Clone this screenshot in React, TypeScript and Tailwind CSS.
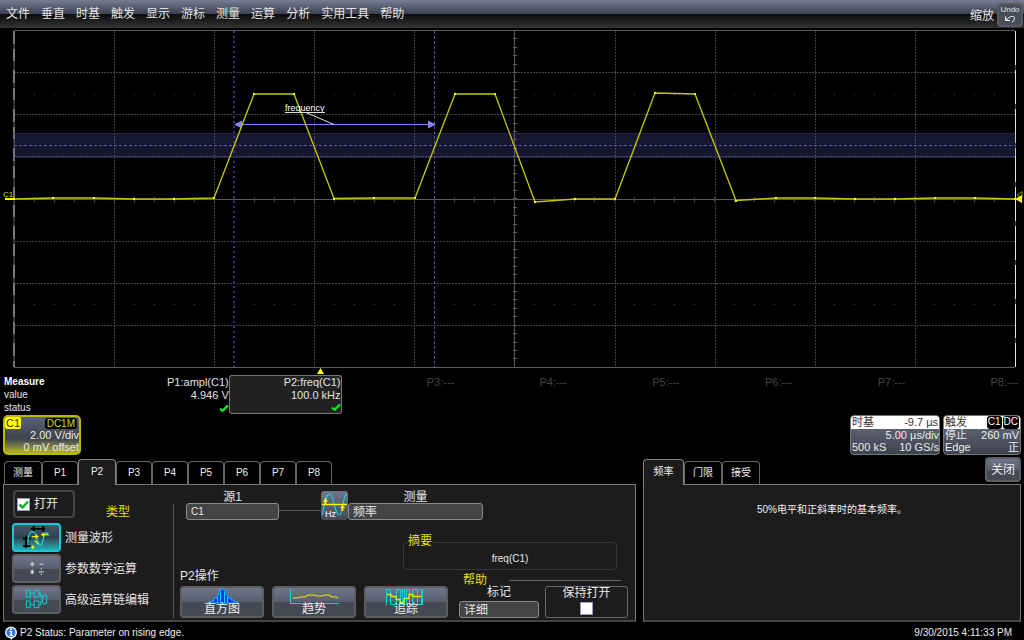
import { useState } from 'react';
import clsx from 'clsx';

const menuItems = ['文件', '垂直', '时基', '触发', '显示', '游标', '测量', '运算', '分析', '实用工具', '帮助'];
const measureTabs = ['测量', 'P1', 'P2', 'P3', 'P4', 'P5', 'P6', 'P7', 'P8'];
const helpTabs = ['频率', '门限', '接受'];

const measurements = [
   { name: 'P1:ampl(C1)', value: '4.946 V', ok: true },
   { name: 'P2:freq(C1)', value: '100.0 kHz', ok: true },
   { name: 'P3:---', value: '', ok: false },
   { name: 'P4:---', value: '', ok: false },
   { name: 'P5:---', value: '', ok: false },
   { name: 'P6:---', value: '', ok: false },
   { name: 'P7:---', value: '', ok: false },
   { name: 'P8:---', value: '', ok: false },
];

// sampled trace of C1
const samples = [
   [14, 199], [53, 198], [94, 198], [134, 199], [174, 199], [214, 198],
   [254, 94], [294, 94], [334, 198.5], [374, 198], [415, 198], [455, 94],
   [495, 94], [535, 202], [575, 199], [615, 199], [655, 93], [695, 94],
   [736, 200.5], [776, 198], [815, 198], [855, 199], [895, 199], [935, 198],
   [975, 198], [1015, 199],
];

const raised =
   'rounded-[4px] border-2 border-[#5d5e63] bg-linear-to-b from-[#70758a] from-0% via-[#585d6e] via-50% to-[#454954] to-51% text-[#eee]';
const field =
   'h-[17px] w-full appearance-none rounded-[3px] border border-[#8a8a8a] bg-[#444] pl-1 leading-none text-[#e6e6e6]';

const Check = () => (
   <svg viewBox="0 0 10 8" className="ml-auto h-2 w-2.5" role="img" aria-label="ok">
      <path d="M1 4.6 L3.6 6.8 L9 1.4" fill="none" stroke="#00f020" strokeWidth="2.2" />
   </svg>
);

const Waveform = () => {
   const columns = [1, 2, 3, 4, 6, 7, 8, 9];
   const rows = [1, 2, 3, 5, 6, 7];
   const ticks = Array.from({ length: 49 }, (_, i) => i + 1);
   return (
      <svg viewBox="0 28 1024 347" className="block w-full">
         <g stroke="#424242" strokeDasharray="2 1">
            {columns.map((c) => (
               <line key={c} x1={14.5 + Math.round(c * 100.1)} x2={14.5 + Math.round(c * 100.1)} y1="31" y2="367" />
            ))}
            {rows.map((r) => (
               <line key={r} x1="14" x2="1015" y1={30.5 + Math.round(r * 42.1)} y2={30.5 + Math.round(r * 42.1)} />
            ))}
         </g>
         <g stroke="#5c5c5c">
            <path d="M14 30.5 H1015 M14 367.5 H1015 M14 199.5 H1015" />
            <path d="M514.5 31 V367" />
            {ticks.map((t) => (
               <path key={t} d={`M${14.5 + t * 20} 197 v5`} stroke="#484848" />
            ))}
            {ticks.slice(0, 39).map((t) => (
               <path key={t} d={`M513 ${30.5 + Math.round(t * 8.42)} h4`} />
            ))}
         </g>
         <g fill="#4a4a4a">
            {ticks.filter((t) => t % 5 !== 0).map((t) => (
               <path key={t} d={`M${14 + t * 20} 94 h1 v1 h-1 z M${14 + t * 20} 304 h1 v1 h-1 z`} />
            ))}
         </g>
         <path d="M14 31 V367" stroke="#333" strokeWidth="2" />
         <path d="M14 31 V367" stroke="#777" strokeWidth="2" strokeDasharray="13 5 12 9" />
         <path d="M1015.5 31 V367" stroke="#444" />
         <path d="M1015.5 31 V367" stroke="#e4e4e4" strokeDasharray="34 5" />

         <rect x="14" y="133" width="1002" height="24" fill="#5a5ac0" fillOpacity="0.24" />
         <path d="M14 133.5 H1015 M14 157.5 H1015" stroke="#24244a" />
         <path d="M14 145.5 H1015" stroke="#5858ac" strokeDasharray="3 2" />
         <path d="M234 31 V367" stroke="#36367a" strokeWidth="2" strokeDasharray="2 3" />
         <path d="M434.5 31 V367" stroke="#5050a4" strokeDasharray="3 2" />
         <path d="M236 124.5 H432" stroke="#8484f8" />
         <path d="M234 124.5 l8 -4 v8 z M436 124.5 l-8 -4 v8 z" fill="#8484f8" />

         <polyline points={samples.map((p) => p.join(',')).join(' ')} fill="none" stroke="#c6c600" strokeWidth="1.3" />
         {samples.map(([x, y]) => (
            <rect key={x} x={x - 1} y={Math.round(y) - 1} width="2" height="2" fill="#ffff00" />
         ))}

         <text x="285" y="111" fill="#fff" fontSize="9">frequency</text>
         <path d="M285 112.5 H325 M306 112.5 L334 124.5" stroke="#e0e0e0" />

         <text x="3" y="197" fill="#d8d800" fontSize="8">C1</text>
         <path d="M5 199 H15" stroke="#ffff00" strokeWidth="2" />
         <path d="M1022 191.5 v7 l-5 -3.5 z" fill="none" stroke="#8c8c00" />
         <path d="M1022 195 v8 l-7 -4 z" fill="#ffff00" />
         <path d="M320.500 368 l3.500 6 h-7 z" fill="#ffff00" />
      </svg>
   );
};

const MeasureTable = () => (
   <div className="pr-1.5">
      <table className="w-full table-fixed border-separate border-spacing-0 text-right text-[11px] leading-[12px] text-[#e2e2e2]">
         <thead>
            <tr className="h-[13px]">
               <th scope="col" className="w-[116px] p-0 pl-1 pt-px text-left text-[10px] font-bold text-white">Measure</th>
               {measurements.map((m, i) => (
                  <th
                     key={m.name}
                     scope="col"
                     className={clsx(
                        'p-0 font-normal',
                        i === 1 ? 'rounded-t-[3px] border border-b-0 border-[#777] bg-[#222]' : 'pt-px',
                        i > 1 && 'text-[#444]'
                     )}
                  >
                     {m.name}
                  </th>
               ))}
            </tr>
         </thead>
         <tbody>
            <tr className="h-[13px]">
               <th scope="row" className="p-0 pl-1 text-left text-[10px] font-normal">value</th>
               {measurements.map((m, i) => (
                  <td key={m.name} className={clsx('p-0', i === 1 && 'border-x border-[#777] bg-[#222]')}>
                     {m.value}
                  </td>
               ))}
            </tr>
            <tr className="h-[13px]">
               <th scope="row" className="p-0 pl-1 text-left text-[10px] font-normal">status</th>
               {measurements.map((m, i) => (
                  <td
                     key={m.name}
                     className={clsx('p-0', i === 1 && 'rounded-b-[3px] border border-t-0 border-[#777] bg-[#222]')}
                  >
                     {m.ok && <Check />}
                  </td>
               ))}
            </tr>
         </tbody>
      </table>
   </div>
);

const Descriptors = () => (
   <div className="mt-px flex h-10 items-start gap-[3px] px-[3px] text-[11px] leading-[12px] text-[#ececec]">
      <div className="mr-auto h-10 w-[78px] overflow-hidden rounded-[5px] border-2 border-[#b8b800] bg-linear-to-b from-[#5c637a] from-0% via-[#3e424c] via-60% to-[#b4b400] to-100%">
         <div className="flex items-center justify-between pr-0.5">
            <span className="rounded-[2px] bg-[#ffff00] px-px text-[#333300]">C1</span>
            <span className="rounded-[3px] bg-black px-0.5 text-[10px] leading-[11px] text-[#d8d800]">DC1M</span>
         </div>
         <div className="text-right whitespace-nowrap">2.00 V/div</div>
         <div className="text-right whitespace-nowrap">0 mV offset</div>
      </div>
      <div className="h-10 w-[90px] overflow-hidden rounded-[4px] border border-[#777] bg-linear-to-b from-[#6c7184] to-[#3e424d]">
         <div className="flex h-[13px] justify-between bg-white px-px text-[#333]">
            <span>时基</span>
            <span>-9.7 µs</span>
         </div>
         <div className="text-right">5.00 µs/div</div>
         <div className="flex justify-between pl-px">
            <span>500 kS</span>
            <span>10 GS/s</span>
         </div>
      </div>
      <div className="h-10 w-[78px] overflow-hidden rounded-[4px] border border-[#777] bg-linear-to-b from-[#6c7184] to-[#3e424d]">
         <div className="flex h-[13px] justify-between bg-white px-px text-[#333]">
            <span>触发</span>
            <span className="flex gap-px text-[10px] text-white">
               <span className="rounded-[3px] bg-black px-px">C1</span>
               <span className="rounded-[3px] bg-black px-px">DC</span>
            </span>
         </div>
         <div className="flex justify-between px-px">
            <span>停止</span>
            <span>260 mV</span>
         </div>
         <div className="flex justify-between px-px">
            <span>Edge</span>
            <span>正</span>
         </div>
      </div>
   </div>
);

type TabsProps = {
   tabs: string[];
   active: string;
   onSelect: (tab: string) => void;
   first: string;
   rest: string;
};

const Tabs = ({ tabs, active, onSelect, first, rest }: TabsProps) => (
   <div className="relative z-10 flex items-end" role="tablist">
      {tabs.map((tab, i) => (
         <button
            key={tab}
            type="button"
            role="tab"
            aria-selected={tab === active}
            onClick={() => onSelect(tab)}
            className={clsx(
               'rounded-t-[4px] border border-b-0 text-[10px] leading-none text-[#eee]',
               tab === active
                  ? '-mb-px h-[26px] border-[#858585] bg-[#1c1c1c] pb-0.5'
                  : 'h-[23px] border-[#666] bg-black',
               tab === active && i > 0 ? 'w-[38px]' : i === 0 ? first : rest
            )}
         >
            {tab}
         </button>
      ))}
   </div>
);

const WaveIcon = () => (
   <svg viewBox="0 0 46 26" className="h-full w-full" fill="none">
      <path d="M20 1 V7 M30 1 V7 M17 4 H32 M12 12 V24 M9 14 H17 M9 22 H17" stroke="#000" strokeWidth="2" />
      <path d="M14 18 C14 10 17 6 20 7 C24 8 23 21 27 21 C31 21 29 9 33 8 C34 8 35 9 36 11" stroke="#10dce8" strokeWidth="1.2" />
      <path d="M18 12 H24 M22 10 L24.500 12 L22 14 M28 10 H35 M31 8 L28.500 10 L31 12 M17 23 H21 M19 21 V25 M21 16 L25 20" stroke="#f0f000" strokeWidth="1.3" />
   </svg>
);

const MathIcon = () => (
   <svg viewBox="0 0 46 26" className="h-full w-full" stroke="#e8e8e8" fill="none">
      <path d="M16 8.500 h5 M18.500 6 v5 M26 8.500 h4 M18.500 14 v5 M16.500 15 l4 3 M20.500 15 l-4 3 M25.500 16.500 h5" />
      <path d="M27.500 13.500 h1 M27.500 19 h1" strokeWidth="1.4" />
   </svg>
);

const ChainIcon = () => (
   <svg viewBox="0 0 46 26" className="h-full w-full" stroke="#10d4e0" fill="none">
      <path d="M12.500 3.500 h4 v7 h-4 z M20.500 3.500 h5 v7 h-5 z M12.500 14.500 h4 v7 h-4 z M20.500 14.500 h5 v7 h-5 z M29.500 8.500 h4 v9 h-4 z" />
      <path d="M16.500 6.500 h4 M16.500 18.500 h4 M25.500 6.500 h2 v4 h2 M25.500 18.500 h2 v-4 h2" />
   </svg>
);

const HzIcon = () => (
   <svg viewBox="0 0 27 29" className="h-full w-full" fill="none">
      <path d="M1 24 C4 14 4 3 8.500 3 C13 3 13 24 18.500 24 C22 24 21 5 26 3" stroke="#10d8e4" strokeWidth="1.2" />
      <path d="M1 13.500 H26" stroke="#ffff00" strokeWidth="1.400" />
      <path d="M4.500 7 V13 M2.500 10 h4 M21.500 13 V20 M19.500 16.500 h4" stroke="#ffff00" strokeWidth="1.500" />
      <text x="4" y="26" fill="#fff" fontSize="9">Hz</text>
   </svg>
);

const HistogramIcon = () => (
   <svg viewBox="0 0 60 17" className="h-[17px] w-[60px]">
      <path d="M16 15 v-1 h3 v-1 h3 v-3 h3 v-3 h2 v-4 h2 v-2 h3 v2 h2 v4 h2 v3 h3 v2 h3 v2 h4 v1 z" fill="#0030ff" stroke="#10b4ff" />
      <path d="M25.500 15 V9 M28.500 15 V4 M32.500 15 V4 M35.500 15 V9" stroke="#10d4ff" />
   </svg>
);

const TrendIcon = () => (
   <svg viewBox="0 0 60 17" className="h-[17px] w-[60px]" fill="none">
      <path d="M6.500 1 V15.500 H55" stroke="#10d4e0" />
      <path d="M9 10 h4 l3 -1 h5 l3 -2 h6 l3 1 h5 l3 -1 h4 l3 2 h4 l2 1" stroke="#e8e800" strokeWidth="1.2" />
   </svg>
);

const TrackIcon = () => (
   <svg viewBox="0 0 60 17" className="h-[17px] w-[60px]" fill="none">
      <path d="M10.500 17 V1.500 h4 V16.500 h6 V1.500 h4 V16.500 h2 V1.500 h2 V16.500 h2 V1.500 h3 V16.500 h3 V1.500 h5 V16.500 h5 V1.500 M45.500 1 V16" stroke="#10d4e0" />
      <path d="M11 6.500 h4 v2 h5 v3 h4 v3 h4 v-4 h5 v-4 h4 v2 h8" stroke="#e8e800" strokeWidth="1.3" />
   </svg>
);

const types = [
   { label: '测量波形', icon: <WaveIcon /> },
   { label: '参数数学运算', icon: <MathIcon /> },
   { label: '高级运算链编辑', icon: <ChainIcon /> },
];

const actions = [
   { label: '直方图', icon: <HistogramIcon /> },
   { label: '趋势', icon: <TrendIcon /> },
   { label: '追踪', icon: <TrackIcon /> },
];

const MeasurePanel = () => {
   const [on, setOn] = useState(true);
   const [keepOpen, setKeepOpen] = useState(false);
   const [type, setType] = useState(types[0].label);
   return (
      <div className="flex h-[138px] border border-b-2 border-[#777] border-b-[#444] bg-[#1c1c1c] text-[12px] leading-[12px] text-[#e6e6e6]">
         <div className="flex w-[169px] flex-col gap-0.5 pt-[5px] pl-2">
            <div className="mb-[3px] flex items-end gap-[31px] pl-px">
               <label className="flex h-7 w-[62px] items-center gap-1 rounded-[4px] border-2 border-[#444] pl-0.5">
                  <span className="relative h-[13px] w-[13px]">
                     <input
                        type="checkbox"
                        checked={on}
                        onChange={(e) => setOn(e.target.checked)}
                        className="block h-[13px] w-[13px] appearance-none border border-[#9a9ac0] bg-white"
                     />
                     {on && (
                        <svg viewBox="0 0 13 13" className="pointer-events-none absolute inset-0">
                           <path d="M2.500 6.500 L5.500 9.500 L11 3.500" fill="none" stroke="#00b818" strokeWidth="2.500" />
                        </svg>
                     )}
                  </span>
                  打开
               </label>
               <span className="text-[#e0e000]">类型</span>
            </div>
            {types.map((t) => (
               <label key={t.label} className="flex h-[29px] items-center gap-1">
                  <button
                     type="button"
                     onClick={() => setType(t.label)}
                     className={
                        t.label === type
                           ? 'h-[29px] w-[49px] rounded-[4px] border-2 border-[#18c8d4] bg-linear-to-b from-[#4c5468] from-0% via-[#2c4450] via-50% to-[#10b4bc] to-100%'
                           : `h-[29px] w-[49px] ${raised}`
                     }
                  >
                     {t.icon}
                  </button>
                  {t.label}
               </label>
            ))}
         </div>
         <div className="mt-[19px] mb-0.5 w-px bg-[#555]" />
         <div className="min-w-0 flex-1 pt-1.5 pr-[7px] pl-1.5">
            <div className="flex h-[29px] items-end pl-1.5">
               <label className="w-[93px] text-center">
                  <span className="block">源1</span>
                  <select className={clsx(field, 'text-[10px]')}>
                     <option>C1</option>
                  </select>
               </label>
               <div className="mb-[9px] h-px w-[42px] bg-[#555]" />
               <button type="button" aria-label="Hz" className="h-[29px] w-[27px] rounded-[3px] bg-linear-to-b from-[#70758a] to-[#454954]">
                  <HzIcon />
               </button>
               <label className="w-[135px] text-center">
                  <span className="block">测量</span>
                  <select className={clsx(field, 'text-[12px]')}>
                     <option>频率</option>
                  </select>
               </label>
            </div>
            <fieldset className="mt-[15px] mr-[11px] ml-auto h-[35px] w-[214px] rounded-[4px] border border-[#3a3a3a] text-center">
               <legend className="ml-1 h-[14px] text-left text-[#e0e000]">摘要</legend>
               <div className="pt-1 text-[10px]">freq(C1)</div>
            </fieldset>
            <div className="flex items-end justify-between">
               <div>
                  <div className="mb-1">P2操作</div>
                  <div className="flex gap-2">
                     {actions.map((a) => (
                        <button
                           key={a.label}
                           type="button"
                           className={clsx('flex h-8 w-[84px] flex-col items-center', raised)}
                        >
                           {a.icon}
                           <span className="-mt-0.5">{a.label}</span>
                        </button>
                     ))}
                  </div>
               </div>
               <div className="w-[169px]">
                  <div className="flex items-center gap-[22px] pr-[7px] pl-1 text-[#e0e000]">
                     帮助
                     <span className="h-px flex-1 bg-[#666]" />
                  </div>
                  <div className="flex gap-1.5">
                     <label className="flex w-20 flex-col justify-between text-center">
                        标记
                        <select className={clsx(field, 'text-[12px]')}>
                           <option>详细</option>
                        </select>
                     </label>
                     <label className="flex h-8 flex-1 flex-col items-center gap-[3px] rounded-[3px] border border-[#666] text-center">
                        保持打开
                        <input
                           type="checkbox"
                           checked={keepOpen}
                           onChange={(e) => setKeepOpen(e.target.checked)}
                           className="h-[13px] w-[13px] appearance-none border border-[#9a9ac0] bg-white checked:bg-[#00b818]"
                        />
                     </label>
                  </div>
               </div>
            </div>
         </div>
      </div>
   );
};

const App = () => {
   const [tab, setTab] = useState('P2');
   const [helpTab, setHelpTab] = useState('频率');
   return (
      <div className="min-h-screen bg-black font-['Liberation_Sans','Noto_Sans_CJK_SC',sans-serif]">
         <header className="flex h-7 items-center bg-linear-to-b from-[#777e92] from-0% via-[#3c4150] via-49% to-[#333] to-100% text-[12px] text-[#e4e4e4]">
            <nav className="flex h-7 flex-1 items-center gap-[11px] bg-linear-to-b from-transparent from-49% via-[#0c0c0c] via-50% to-[#343434] to-100% pl-1.5">
               {menuItems.map((item) => (
                  <button key={item} type="button" className="leading-none">
                     {item}
                  </button>
               ))}
               <span className="mt-1 ml-auto leading-none">缩放</span>
               <button
                  type="button"
                  className="mt-0.5 mr-px -ml-2 flex h-6 w-[26px] flex-col items-center rounded-[4px] border-2 border-[#5a5b60] bg-[#484d5a] text-[8px] leading-[10px]"
               >
                  Undo
                  <svg viewBox="0 0 12 8" className="h-2 w-3" fill="none" stroke="#fff">
                     <path d="M1.500 1.500 V5.500 H6 M2 5 L5 2.500 C7 1 10.500 1 10.500 3.500 C10.500 5.500 9 6.500 8 7" />
                  </svg>
               </button>
            </nav>
         </header>

         <Waveform />
         <MeasureTable />
         <Descriptors />

         <div className="flex gap-[7px] px-[3px]">
            <section className="min-w-0 flex-[633]">
               <div className="flex h-[29px] items-end pl-px">
                  <Tabs tabs={measureTabs} active={tab} onSelect={setTab} first="w-[38px]" rest="w-9" />
               </div>
               <MeasurePanel />
            </section>
            <section className="min-w-0 flex-[378]">
               <div className="flex h-[29px] items-end justify-between">
                  <Tabs tabs={helpTabs} active={helpTab} onSelect={setHelpTab} first="w-[41px]" rest="w-[38px]" />
                  <button type="button" className={clsx('mb-0.5 h-[25px] w-9 text-[12px] leading-none', raised)}>
                     关闭
                  </button>
               </div>
               <div className="h-[138px] border border-b-2 border-[#777] border-b-[#444] bg-[#1c1c1c] pt-[18px] text-center text-[10px] leading-[14px] text-[#eee]">
                  50%电平和正斜率时的基本频率。
               </div>
            </section>
         </div>

         <footer className="flex h-[18px] items-center pt-1 pr-3 pl-1 text-[10px] leading-none text-[#eee]">
            <svg viewBox="0 0 14 14" className="mr-0.5 h-3.5 w-3.5">
               <circle cx="7" cy="6.500" r="6" fill="#e8f0ff" />
               <circle cx="7" cy="6.500" r="4.500" fill="#3a78d0" />
               <path d="M6 11 l1 3 l3 -3 z" fill="#e8f0ff" />
               <path d="M6 2.500 h2 v1.500 h-2 z M5.500 5 h2.500 v4 h1 v1 h-3.500 v-1 h1 v-3 h-1 z" fill="#fff" />
            </svg>
            <span className="flex-1">P2 Status: Parameter on rising edge.</span>
            <span>9/30/2015 4:11:33 PM</span>
         </footer>
      </div>
   );
};

export default App;
